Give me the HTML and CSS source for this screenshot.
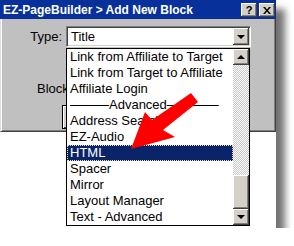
FILE: index.html
```html
<!DOCTYPE html>
<html>
<head>
<meta charset="utf-8">
<link rel="stylesheet" href="styles.css">
</head>
<body>
<div class="shot">
  <div class="window">
    <div class="titlebar">
      <span class="title">EZ-PageBuilder &gt; Add New Block</span>
      <div class="tbtns">
        <span class="tbtn">?</span>
        <span class="tbtn"><svg width="8" height="7" viewBox="0 0 8 7"><path d="M0 0h2l2 2.5L6 0h2L5 3.5 8 7H6L4 4.5 2 7H0l3-3.5z" fill="#000"/></svg></span>
      </div>
    </div>
    <div class="body">
      <div class="row-type">
        <span class="lbl">Type:</span>
        <div class="combo">
          <span class="combo-text">Title</span>
          <span class="combo-btn"><span class="tri-down"></span></span>
        </div>
      </div>
      <div class="row-block"><span class="lbl2">Block</span></div>
      <div class="row-btn"><span class="btn"></span></div>
    </div>
  </div>

  <div class="dropdown">
    <ul class="options">
      <li>Link from Affiliate to Target</li>
      <li>Link from Target to Affiliate</li>
      <li>Affiliate Login</li>
      <li>———Advanced————</li>
      <li>Address Search</li>
      <li>EZ-Audio</li>
      <li class="sel">HTML</li>
      <li>Spacer</li>
      <li>Mirror</li>
      <li>Layout Manager</li>
      <li>Text - Advanced</li>
    </ul>
    <div class="scrollbar">
      <span class="sbtn"><span class="tri-up"></span></span>
      <span class="track"></span>
      <span class="thumb"></span>
      <span class="sbtn"><span class="tri-down"></span></span>
    </div>
  </div>

  <svg class="arrow" width="276" height="228" viewBox="0 0 276 228">
    <polygon points="131,149 145,112 152,120 191,93 198,102 163,130 175,137" fill="#ff0000"/>
  </svg>
</div>
</body>
</html>
```

FILE: styles.css
```css
html, body {
  margin: 0;
  padding: 0;
  background: #ffffff;
}

.shot {
  position: relative;
  width: 276px;
  height: 228px;
  background: #ffffff;
  box-shadow: 9px 9px 7px rgba(0, 0, 0, 0.55);
  font-family: "Liberation Sans", Arial, sans-serif;
  font-size: 13px;
  color: #000;
}

.window {
  box-sizing: border-box;
  width: 276px;
  height: 132px;
  background: #c0c0c0;
  border-left: 1px solid #dfdfdf;
  border-right: 1px solid #404040;
  border-bottom: 1px solid #404040;
  box-shadow: inset 1px 0 #ffffff, inset -1px -1px #808080;
  display: flex;
  flex-direction: column;
}

.titlebar {
  height: 19px;
  margin-left: -1px;
  margin-right: -1px;
  background: #08309a;
  display: flex;
  align-items: center;
  justify-content: space-between;
  padding: 0 1px 0 3px;
}

.title {
  color: #ffffff;
  font-weight: bold;
  font-size: 12px;
  line-height: 19px;
  padding-top: 2px;
  white-space: nowrap;
}

.tbtns {
  display: flex;
  gap: 2px;
  margin-top: 1px;
}

.tbtn {
  box-sizing: border-box;
  width: 16px;
  height: 14px;
  background: #d4d0c8;
  box-shadow: inset -1px -1px #404040, inset 1px 1px #ffffff, inset -2px -2px #808080;
  display: flex;
  align-items: center;
  justify-content: center;
  font-weight: bold;
  font-size: 11px;
  line-height: 1;
  color: #000;
}

.body {
  display: flex;
  flex-direction: column;
  padding-top: 7px;
}

.row-type {
  display: flex;
  align-items: center;
  gap: 4px;
}

.lbl {
  width: 61px;
  text-align: right;
  line-height: 16px;
  padding-top: 1px;
}

.combo {
  box-sizing: border-box;
  width: 185px;
  height: 21px;
  background: #ffffff;
  border-top: 1px solid #808080;
  border-left: 1px solid #808080;
  border-right: 1px solid #ffffff;
  border-bottom: 1px solid #ffffff;
  box-shadow: inset 1px 1px #404040, inset -1px -1px #d4d0c8;
  display: flex;
  align-items: center;
  justify-content: space-between;
  padding: 1px 1px 1px 4px;
}

.combo-text {
  line-height: 16px;
}

.combo-btn {
  box-sizing: border-box;
  width: 16px;
  height: 17px;
  background: #d4d0c8;
  box-shadow: inset -1px -1px #404040, inset 1px 1px #ffffff, inset -2px -2px #808080;
  display: flex;
  align-items: center;
  justify-content: center;
}

.tri-down {
  width: 0;
  height: 0;
  border-left: 4px solid transparent;
  border-right: 4px solid transparent;
  border-top: 4px solid #000;
}

.tri-up {
  width: 0;
  height: 0;
  border-left: 4px solid transparent;
  border-right: 4px solid transparent;
  border-bottom: 4px solid #000;
}

.row-block {
  margin-top: 34px;
  padding-left: 36px;
  line-height: 16px;
}

.row-btn {
  margin-top: 8px;
  padding-left: 61px;
}

.btn {
  display: block;
  box-sizing: border-box;
  width: 70px;
  height: 24px;
  background: #d4d0c8;
  border: 1px solid #000;
  box-shadow: inset 1px 1px #ffffff, inset -1px -1px #404040;
}

.dropdown {
  position: absolute;
  left: 66px;
  top: 48px;
  box-sizing: border-box;
  width: 184px;
  height: 178px;
  background: #ffffff;
  border: 1px solid #000;
  display: flex;
}

.options {
  list-style: none;
  margin: 0;
  padding: 0;
  flex: 1;
}

.options li {
  height: 16px;
  line-height: 16px;
  padding-left: 3px;
  white-space: nowrap;
  overflow: hidden;
}

.options li.sel {
  background: #0a246a;
  color: #ffffff;
  outline: 1px dotted #f0e2a0;
  outline-offset: -1px;
}

.scrollbar {
  width: 16px;
  display: flex;
  flex-direction: column;
}

.sbtn {
  box-sizing: border-box;
  height: 16px;
  background: #d4d0c8;
  box-shadow: inset -1px -1px #404040, inset 1px 1px #ffffff, inset -2px -2px #808080;
  display: flex;
  align-items: center;
  justify-content: center;
}

.track {
  flex: 1;
  background-color: #ffffff;
  background-image: conic-gradient(#c8c8c8 25%, #ffffff 0 50%, #c8c8c8 0 75%, #ffffff 0);
  background-size: 2px 2px;
}

.thumb {
  box-sizing: border-box;
  height: 34px;
  background: #d4d0c8;
  box-shadow: inset -1px -1px #404040, inset 1px 1px #ffffff, inset -2px -2px #808080;
}

.arrow {
  position: absolute;
  left: 0;
  top: 0;
  pointer-events: none;
}
```
